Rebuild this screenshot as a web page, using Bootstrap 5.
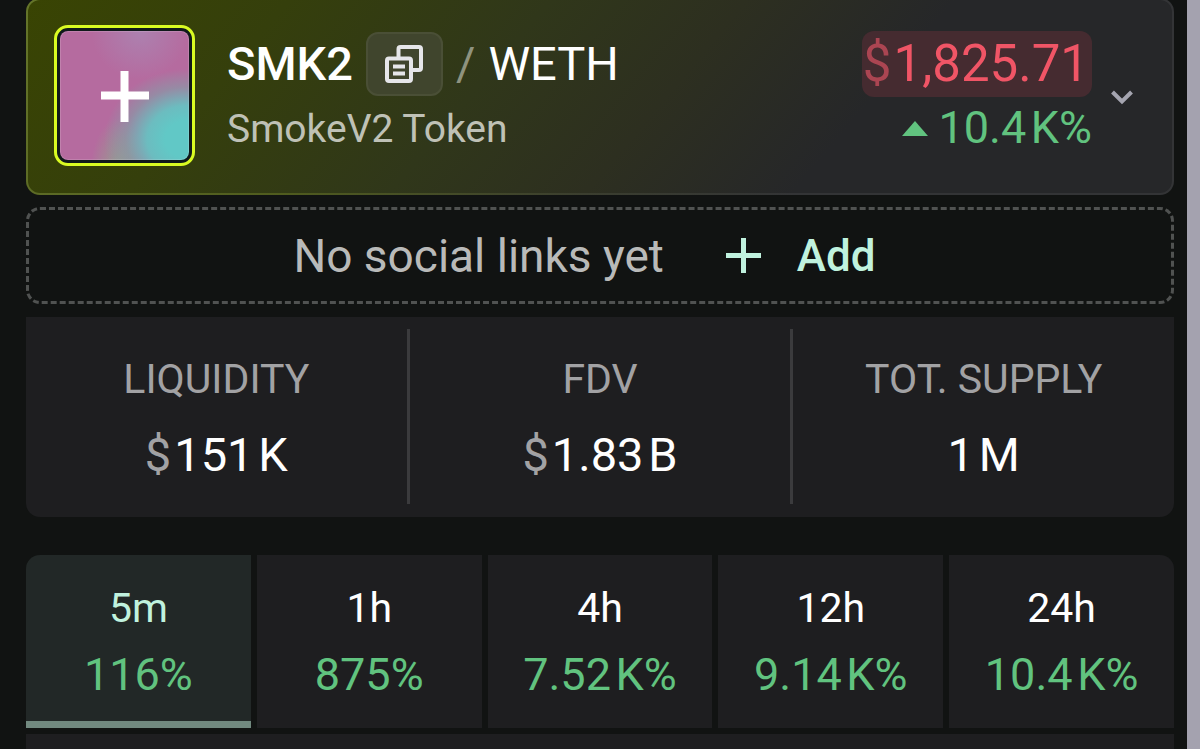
<!DOCTYPE html>
<html lang="en" data-bs-theme="dark">
<head>
<meta charset="utf-8">
<meta name="viewport" content="width=device-width, initial-scale=1">
<title>SMK2 / WETH</title>
<link href="https://cdn.jsdelivr.net/npm/bootstrap@5.3.0/dist/css/bootstrap.min.css" rel="stylesheet">
<style>
  body { font-family: Roboto, "Liberation Sans", sans-serif; background: #111312; color: #fff; }
  .page-shell { border-right: 13px solid #a4a2af; padding: 0 13px 0 26px; overflow: hidden; }
  .fs-label { font-size: 41px; line-height: 50px; }
  .fs-pct { font-size: 45px; line-height: 54px; }
  .fs-value { font-size: 47px; line-height: 56px; }
  .weight-500 { font-weight: 500; }
  .text-up { color: #61c37f; }
  .text-mint { color: #c0f2de; }
  .text-dim { color: #a2a2a4; }
  .text-soft { color: #b9bab9; }

  .pair-card { margin-top: -2px; padding: 25px 39px 27px 26px; gap: 32px; border: 2px solid transparent; border-radius: 14px;
    background: linear-gradient(130deg, #394403 0%, #353f0c 20%, #30371a 40%, #2d2f20 55%, #262729 71%, #262729 100%) padding-box,
                linear-gradient(130deg, #65752a 0%, #505c1e 32%, #3b3e2f 55%, #333436 71%, #333436 100%) border-box; }
  .avatar-btn { width: 141px; height: 141px; padding: 3px; border: 3px solid #d9fb22; border-radius: 14px; background: #10191b; }
  .avatar-art { border-radius: 8px; box-shadow: inset 0 0 0 1px rgba(255,255,255,.15);
    background: radial-gradient(circle at 62% 0%, rgba(170,135,180,.8), transparent 32%),
                radial-gradient(ellipse at 98% 84%, #61c8c6 12%, rgba(100,197,195,.9) 22%, rgba(120,170,170,.5) 34%, transparent 46%),
                radial-gradient(ellipse at 45% 112%, rgba(145,165,140,.9), transparent 28%),
                #b56b9f; }
  .name-col { padding-top: 7px; }
  .name-row { height: 64px; gap: 13px; font-size: 47px; line-height: 64px; }
  .token-name { font-size: 39px; line-height: 50px; color: #bfc1b6; }
  .slash { color: #8f937f; }
  .copy-btn { width: 77px; height: 64px; border: 2px solid #4a4f36; border-radius: 12px; background: #40452d; }
  .price-col { padding-top: 6px; gap: 4px; }
  .price-tag { gap: 2px; padding: 0 3px 0 1px; font-size: 51px; line-height: 66px; border-radius: 12px; background: #452b30; color: #f05566; }
  .price-tag .unit { color: #ab4552; }
  .expand-btn { margin: 64px 0 0 19px; }

  .social-box { margin-top: 12px; height: 97px; padding-right: 31px; border: 3px dashed #505251; border-radius: 14px; font-size: 46px; line-height: 54px; }
  .add-btn { margin-left: 62px; gap: 36px; font-size: 44px; line-height: 54px; }
  .stats { margin-top: 13px; padding: 12px 0 13px; background: #1e1e20; border-radius: 0 0 14px 14px; }
  .stat { padding: 25px 0 21px; }
  .stat + .stat { border-left: 3px solid #3b3b3d; }
  .stat dt { margin-bottom: 23px; }
  .stat .unit { margin-right: 3px; color: #a2a2a4; }
  .frames { margin-top: 38px; gap: 6px; }
  .frame-btn { padding: 28px 0 19px; border: 0; border-bottom: 7px solid #1e1e20; background: #1e1e20; color: #fff; gap: 15px; }
  .frame-btn:first-child { border-top-left-radius: 14px; }
  .frame-btn:last-child { border-top-right-radius: 14px; }
  .frame-btn.active { background: #222827; border-bottom-color: #71897f; color: #c0f2de; }
  .next-panel { margin-top: 6px; background: #1e1e20; }
</style>
</head>
<body>
<main class="page-shell vh-100 d-flex flex-column">
  <section class="pair-card d-flex align-items-start">
    <button type="button" class="avatar-btn flex-shrink-0" aria-label="Add logo">
      <span class="avatar-art d-flex w-100 h-100 align-items-center justify-content-center">
        <svg width="48" height="52" viewBox="0 0 48 52" stroke="#fff" stroke-width="8"><path d="M23.500 1v51M0 25.500h48"/></svg>
      </span>
    </button>
    <div class="name-col d-flex flex-column flex-grow-1 gap-2">
      <h1 class="name-row d-flex align-items-center m-0 fw-normal">
        <span class="weight-500">SMK2</span>
        <button type="button" class="copy-btn d-flex align-items-center justify-content-center p-0" aria-label="Copy address">
          <svg width="38" height="38" viewBox="0 0 38 38" fill="none" stroke="#e6e6ea" stroke-width="4" stroke-linejoin="round"><path d="M13.500 12V4q0-2 2-2H34q2 0 2 2v19q0 2-2 2h-7"/><rect x="2" y="13.500" width="24" height="22.500" rx="2"/><path d="M8 21.500h12M8 28.500h12"/></svg>
        </button>
        <span class="slash">/</span>
        <span>WETH</span>
      </h1>
      <div class="token-name">SmokeV2 Token</div>
    </div>
    <div class="d-flex align-items-start">
      <div class="price-col d-flex flex-column align-items-end">
        <div class="price-tag d-flex"><span class="unit">$</span><span>1,825.71</span></div>
        <div class="fs-pct text-up d-flex align-items-center gap-2">
          <svg width="28" height="15" viewBox="0 0 28 15" fill="#61c37f"><path d="M13 0l13 15H0z"/></svg>
          <span>10.4&#8202;K%</span>
        </div>
      </div>
      <button type="button" class="expand-btn btn p-0 border-0 d-flex" aria-label="Show details">
        <svg width="22" height="16" viewBox="0 0 22 16" fill="none" stroke="#a5a5b0" stroke-width="4"><path d="M1.500 3L11 12.500 20.500 3"/></svg>
      </button>
    </div>
  </section>

  <section class="social-box d-flex align-items-center justify-content-center">
    <span class="text-soft">No social links yet</span>
    <button type="button" class="add-btn btn p-0 border-0 text-mint weight-500 d-flex align-items-center">
      <svg width="35" height="35" viewBox="0 0 35 35" stroke="#c0f2de" stroke-width="5"><path d="M17.500 0v35M0 17.500h35"/></svg>
      Add
    </button>
  </section>

  <section class="stats row g-0 text-center">
    <dl class="stat col m-0"><dt class="fs-label fw-normal text-dim">LIQUIDITY</dt><dd class="fs-value m-0"><span class="unit">$</span>151&#8202;K</dd></dl>
    <dl class="stat col m-0"><dt class="fs-label fw-normal text-dim">FDV</dt><dd class="fs-value m-0"><span class="unit">$</span>1.83&#8202;B</dd></dl>
    <dl class="stat col m-0"><dt class="fs-label fw-normal text-dim">TOT. SUPPLY</dt><dd class="fs-value m-0">1&#8202;M</dd></dl>
  </section>

  <nav class="frames d-flex" aria-label="Time frame">
    <button type="button" class="frame-btn active col d-flex flex-column align-items-center"><span class="fs-label">5m</span><span class="fs-pct text-up">116%</span></button>
    <button type="button" class="frame-btn col d-flex flex-column align-items-center"><span class="fs-label">1h</span><span class="fs-pct text-up">875%</span></button>
    <button type="button" class="frame-btn col d-flex flex-column align-items-center"><span class="fs-label">4h</span><span class="fs-pct text-up">7.52&#8202;K%</span></button>
    <button type="button" class="frame-btn col d-flex flex-column align-items-center"><span class="fs-label">12h</span><span class="fs-pct text-up">9.14&#8202;K%</span></button>
    <button type="button" class="frame-btn col d-flex flex-column align-items-center"><span class="fs-label">24h</span><span class="fs-pct text-up">10.4&#8202;K%</span></button>
  </nav>
  <div class="next-panel flex-grow-1"></div>
</main>
<script src="https://cdn.jsdelivr.net/npm/bootstrap@5.3.0/dist/js/bootstrap.bundle.min.js"></script>
</body>
</html>
